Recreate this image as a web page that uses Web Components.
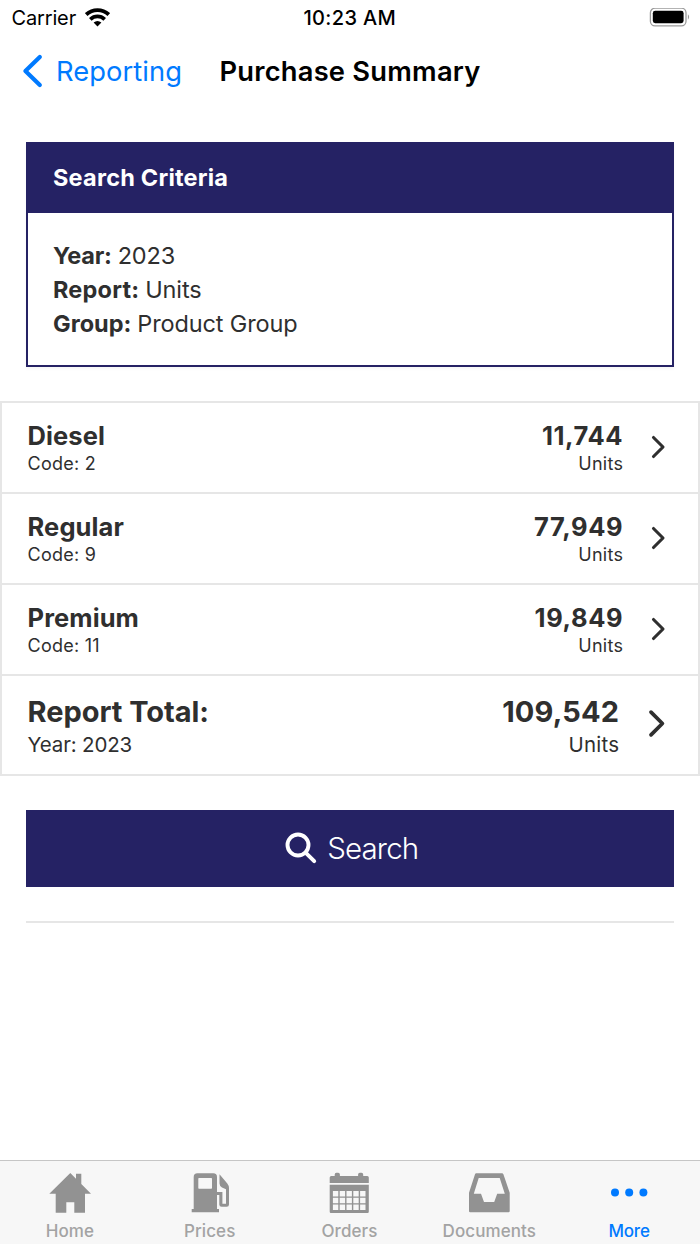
<!DOCTYPE html>
<html lang="en">
<head>
<meta charset="utf-8">
<meta name="viewport" content="width=device-width, initial-scale=1">
<title>Purchase Summary</title>
<style>
  body {
    margin: 0;
    background: #fff;
    font-family: Inter, "Liberation Sans", sans-serif;
    --navy: #252264;
    --ink: #2f2f2f;
    --line: #e6e6e6;
    --blue: #007aff;
  }
</style>
</head>
<body>
<app-screen>
  <status-bar slot="top" carrier="Carrier" time="10:23 AM"></status-bar>
  <nav-bar slot="top" back="Reporting">Purchase Summary</nav-bar>

  <criteria-card heading="Search Criteria">
    <criteria-line label="Year:">2023</criteria-line>
    <criteria-line label="Report:" style="--label-spacing: .2px">Units</criteria-line>
    <criteria-line label="Group:" style="--label-spacing: 0px">Product Group</criteria-line>
  </criteria-card>

  <result-list>
    <result-row name="Diesel" detail="Code: 2" amount="11,744" unit="Units"></result-row>
    <result-row name="Regular" detail="Code: 9" amount="77,949" unit="Units"></result-row>
    <result-row name="Premium" detail="Code: 11" amount="19,849" unit="Units"></result-row>
    <result-row total name="Report Total:" detail="Year: 2023" amount="109,542" unit="Units"></result-row>
  </result-list>

  <search-button>Search</search-button>

  <tab-bar slot="bottom">
    <tab-item icon="home">Home</tab-item>
    <tab-item icon="prices">Prices</tab-item>
    <tab-item icon="orders">Orders</tab-item>
    <tab-item icon="documents">Documents</tab-item>
    <tab-item icon="more" active>More</tab-item>
  </tab-bar>
</app-screen>

<script>
class AppScreen extends HTMLElement {
  constructor() {
    super();
    this.attachShadow({ mode: 'open' });
    this.shadowRoot.innerHTML = `
      <style>
        :host {
          display: flex;
          flex-direction: column;
          height: 1244px;
          overflow: hidden;
        }

        main {
          flex: 1;
          padding-top: 36px;
        }

        hr {
          margin: 34px 26px 0;
          border: 0;
          height: 2px;
          background: var(--line);
        }
      </style>
      <slot name="top"></slot>
      <main>
        <slot></slot>
        <hr>
      </main>
      <slot name="bottom"></slot>
    `;
  }
}

class StatusBar extends HTMLElement {
  constructor() {
    super();
    this.attachShadow({ mode: 'open' });
  }

  connectedCallback() {
    this.shadowRoot.innerHTML = `
      <style>
        :host {
          display: grid;
          grid-template-columns: 1fr auto 1fr;
          align-items: center;
          height: 36px;
          padding: 0 9px 0 11.5px;
          font-size: 20px;
          color: #000;
        }

        .carrier {
          display: flex;
          align-items: center;
          gap: 9px;
          letter-spacing: -.15px;
        }

        .time {
          margin-right: 3px;
          font-weight: 500;
          letter-spacing: .35px;
        }

        .battery {
          justify-self: end;
        }

        svg {
          display: block;
        }
      </style>
      <div class="carrier">
        <span>${this.getAttribute('carrier')}</span>
        <svg width="25" height="20" viewBox="0 0 25 20" fill="none" stroke="#000" stroke-width="3.8">
          <path d="M1.2 6.6C7.6 .5 17.4 .5 23.8 6.6"></path>
          <path d="M5.3 11.3C9.5 7.4 15.5 7.4 19.7 11.3"></path>
          <path fill="#000" stroke="none" d="M8.6 14.5Q12.5 11.3 16.4 14.5L12.5 18.4Z"></path>
        </svg>
      </div>
      <div class="time">${this.getAttribute('time')}</div>
      <svg class="battery" width="42" height="20" viewBox="0 0 42 20">
        <rect x="1.4" y=".2" width="35.6" height="17.6" rx="4.6" fill="none" stroke="#9b9b9b" stroke-width="1.3"></rect>
        <rect x="3.8" y="2.8" width="30.8" height="12.4" rx="2.4" fill="#000"></rect>
        <path d="M38.9 6.3Q41.4 9 38.9 11.7Z" fill="#9b9b9b"></path>
      </svg>
    `;
  }
}

class NavBar extends HTMLElement {
  constructor() {
    super();
    this.attachShadow({ mode: 'open' });
  }

  connectedCallback() {
    this.shadowRoot.innerHTML = `
      <style>
        :host {
          display: grid;
          grid-template-columns: 1fr auto 1fr;
          align-items: center;
          height: 70px;
          padding: 0 21.5px;
          font-size: 27.3px;
        }

        .back {
          display: flex;
          align-items: center;
          gap: 13.5px;
          color: var(--blue);
          letter-spacing: .08px;
        }

        .title {
          color: #000;
          font-weight: 600;
          letter-spacing: .23px;
        }

        svg {
          display: block;
        }
      </style>
      <div class="back">
        <svg width="21" height="34" viewBox="0 0 21 34" fill="none" stroke="currentColor" stroke-width="4.2" stroke-linecap="round" stroke-linejoin="round">
          <path d="M17.8 3L3.4 17L17.8 31"></path>
        </svg>
        <span>${this.getAttribute('back')}</span>
      </div>
      <div class="title"><slot></slot></div>
    `;
  }
}

class CriteriaCard extends HTMLElement {
  constructor() {
    super();
    this.attachShadow({ mode: 'open' });
  }

  connectedCallback() {
    this.shadowRoot.innerHTML = `
      <style>
        :host {
          display: block;
          box-sizing: border-box;
          height: 225px;
          margin: 0 26px;
          border: 2px solid var(--navy);
          font-size: 23.5px;
          line-height: 34px;
          color: var(--ink);
          box-shadow: 0 2px 3px rgba(0, 0, 0, .04);
        }

        header {
          height: 69px;
          padding-left: 25px;
          background: var(--navy);
          color: #fff;
          font-weight: 650;
          letter-spacing: .22px;
          line-height: 67.5px;
        }

        .lines {
          padding: 25.5px 25px 0;
        }
      </style>
      <header>${this.getAttribute('heading')}</header>
      <div class="lines"><slot></slot></div>
    `;
  }
}

class CriteriaLine extends HTMLElement {
  constructor() {
    super();
    this.attachShadow({ mode: 'open' });
  }

  connectedCallback() {
    this.shadowRoot.innerHTML = `
      <style>
        :host {
          display: flex;
          gap: 6px;
          letter-spacing: -.14px;
        }

        b {
          font-weight: 700;
          letter-spacing: var(--label-spacing, -.25px);
        }
      </style>
      <b>${this.getAttribute('label')}</b>
      <span><slot></slot></span>
    `;
  }
}

class ResultList extends HTMLElement {
  constructor() {
    super();
    this.attachShadow({ mode: 'open' });
    this.shadowRoot.innerHTML = `
      <style>
        :host {
          display: block;
          margin: 34px 0;
          border: 2px solid var(--line);
          border-bottom: 0;
        }
      </style>
      <slot></slot>
    `;
  }
}

class ResultRow extends HTMLElement {
  constructor() {
    super();
    this.attachShadow({ mode: 'open' });
  }

  connectedCallback() {
    this.shadowRoot.innerHTML = `
      <style>
        :host {
          display: flex;
          box-sizing: border-box;
          height: 91px;
          padding: 17.6px 32.5px 0 25.6px;
          border-bottom: 2px solid var(--line);
          color: var(--ink);
          font-size: 18px;
          line-height: 26px;
          letter-spacing: .25px;
        }

        .text {
          flex: 1;
        }

        .amount {
          text-align: right;
        }

        .big {
          font-size: 25.5px;
          font-weight: 700;
          line-height: 30px;
          letter-spacing: .08px;
        }

        .amount .big {
          letter-spacing: .6px;
        }

        svg {
          display: block;
          width: 15px;
          height: 24px;
          margin: 14.4px 0 0 27.3px;
        }

        :host([total]) {
          height: 100px;
          padding-top: 19px;
          font-size: 20.5px;
          line-height: 32px;
          letter-spacing: -.15px;
        }

        :host([total]) .big {
          font-size: 29px;
          line-height: 34px;
          letter-spacing: -.04px;
        }

        :host([total]) .amount {
          letter-spacing: .2px;
        }

        :host([total]) .amount .big {
          letter-spacing: .15px;
        }

        :host([total]) svg {
          width: 18px;
          height: 29px;
          margin: 13.7px 0 0 28.3px;
        }
      </style>
      <div class="text">
        <div class="big">${this.getAttribute('name')}</div>
        <div>${this.getAttribute('detail')}</div>
      </div>
      <div class="amount">
        <div class="big">${this.getAttribute('amount')}</div>
        <div>${this.getAttribute('unit')}</div>
      </div>
      <svg viewBox="0 0 15 24" fill="none" stroke="currentColor" stroke-width="3.1" stroke-linecap="round" stroke-linejoin="round">
        <path d="M2.5 2.5L12 12L2.5 21.5"></path>
      </svg>
    `;
  }
}

class SearchButton extends HTMLElement {
  constructor() {
    super();
    this.attachShadow({ mode: 'open' });
    this.shadowRoot.innerHTML = `
      <style>
        :host {
          display: block;
          margin: 0 26px;
        }

        button {
          display: flex;
          align-items: center;
          justify-content: center;
          gap: 10.5px;
          width: 100%;
          height: 77px;
          padding: 0 0 1px 3px;
          border: 0;
          background: var(--navy);
          color: #fff;
          font: 350 29.5px Inter, "Liberation Sans", sans-serif;
          letter-spacing: -.85px;
        }

        svg {
          margin-top: -1px;
        }
      </style>
      <button>
        <svg width="32" height="32" viewBox="0 0 32 32" fill="none" stroke="currentColor" stroke-width="3.9" stroke-linecap="round">
          <circle cx="13" cy="13" r="10.5"></circle>
          <path d="M20.8 20.8L29.2 29.2"></path>
        </svg>
        <span><slot></slot></span>
      </button>
    `;
  }
}

class TabBar extends HTMLElement {
  constructor() {
    super();
    this.attachShadow({ mode: 'open' });
    this.shadowRoot.innerHTML = `
      <style>
        :host {
          display: grid;
          grid-template-columns: repeat(5, 1fr);
          box-sizing: border-box;
          height: 84px;
          padding-right: 1px;
          border-top: 1px solid #c6c6c6;
          background: #f7f7f7;
        }
      </style>
      <slot></slot>
    `;
  }
}

const tabIcons = {
  home: '<path d="M22.3 2L28 7.7V2.7H33.3V13L43 22.7H37V41.7H26.3V31.3H18.3V41.7H7.7V22.7H1.3Z"></path>',
  prices: `
    <path fill-rule="evenodd" d="M5.7 38V6Q5.7 2.3 9.4 2.3H25.3Q29 2.3 29 6V21H34.4V32.7H38V18.3L34 16.6Q31.5 15 31.5 12.5V3.3L39.3 12.6Q41 14.8 41 17V33.5Q41 35.8 38.7 35.8H33.6Q31.3 35.8 31.3 33.5V24H29V38H31V41.3H3.7V38ZM11 7Q10.3 7 10.3 7.7V17Q10.3 17.7 11 17.7H23.3Q24 17.7 24 17V7.7Q24 7 23.3 7Z"></path>`,
  orders: `
    <path d="M2.7 6.5Q2.7 5 4.2 5H7.7V3.5Q7.7 1.8 9.4 1.8H11.2Q12.9 1.8 12.9 3.5V5H31.1V3.5Q31.1 1.8 32.8 1.8H34.5Q36.2 1.8 36.2 3.5V5H40.3Q41.8 5 41.8 6.5V11.9H2.7Z"></path>
    <path fill-rule="evenodd" d="M2.7 13.7H41.8V40.8Q41.8 42 40.6 42H3.9Q2.7 42 2.7 40.8Z
      ${[20, 26.8, 33.6].map(y => [5.9, 12.7, 19.5, 26.3, 33.1].map(x => `M${x} ${y}v5.5h5.4v-5.5z`).join('')).join('')}"></path>`,
  documents: '<path fill-rule="evenodd" d="M9.3 2.3H35Q36 2.3 36.4 3.3L42.7 21.7V40Q42.7 41.2 41.5 41.2H3.2Q2 41.2 2 40V21.7L8 3.3Q8.3 2.3 9.3 2.3ZM11.7 7L6.8 22.7H14L17 31H27.2L30.2 22.7H37.8L32.7 7Z"></path>',
  more: '<circle cx="8" cy="21.5" r="4"></circle><circle cx="22.2" cy="21.5" r="4"></circle><circle cx="36.4" cy="21.5" r="4"></circle>'
};

class TabItem extends HTMLElement {
  constructor() {
    super();
    this.attachShadow({ mode: 'open' });
  }

  connectedCallback() {
    this.shadowRoot.innerHTML = `
      <style>
        :host {
          display: flex;
          flex-direction: column;
          align-items: center;
          padding-top: 10px;
          color: #a3a3a3;
          font-size: 17px;
          font-weight: 500;
          line-height: 32px;
          letter-spacing: .08px;
        }

        svg {
          display: block;
          fill: #929292;
        }

        :host([active]) {
          color: var(--blue);
          letter-spacing: -.2px;
        }

        :host([active]) svg {
          fill: var(--blue);
        }
      </style>
      <svg width="44" height="44" viewBox="0 0 44 44">${tabIcons[this.getAttribute('icon')]}</svg>
      <span><slot></slot></span>
    `;
  }
}

customElements.define('app-screen', AppScreen);
customElements.define('status-bar', StatusBar);
customElements.define('nav-bar', NavBar);
customElements.define('criteria-card', CriteriaCard);
customElements.define('criteria-line', CriteriaLine);
customElements.define('result-list', ResultList);
customElements.define('result-row', ResultRow);
customElements.define('search-button', SearchButton);
customElements.define('tab-bar', TabBar);
customElements.define('tab-item', TabItem);
</script>
</body>
</html>
